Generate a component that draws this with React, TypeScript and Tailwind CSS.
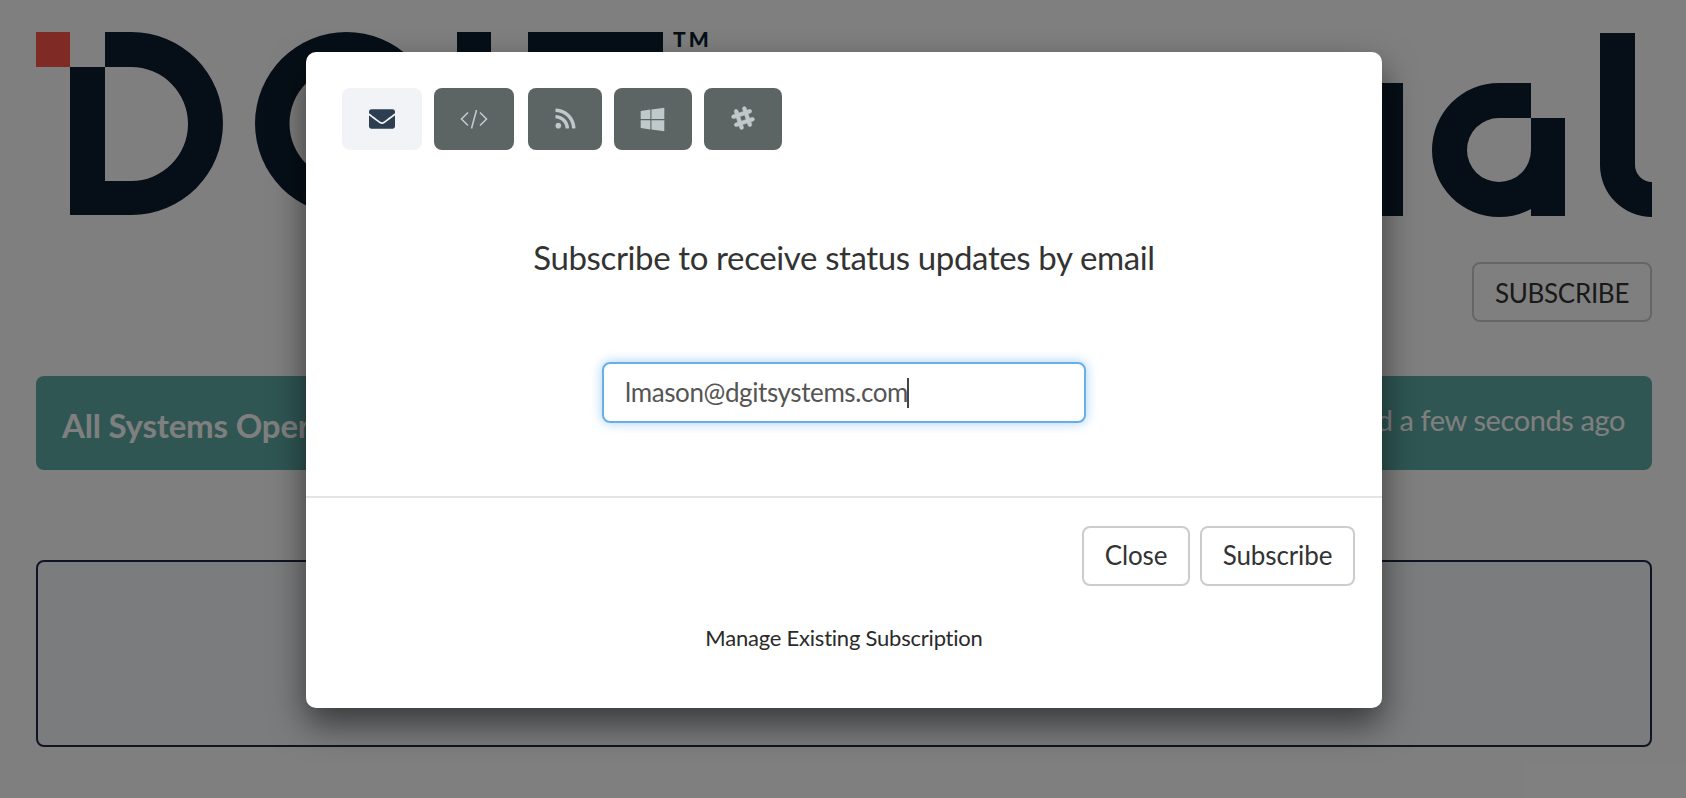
import { FaEnvelope, FaRss, FaWindows, FaSlackHash } from "react-icons/fa";

const tabBase = "flex h-[62px] items-center justify-center rounded-[8px]";
const btn = "h-[60px] rounded-[8px] border-2 border-[#cccccc] bg-white pb-[2px] text-[26px] leading-none tracking-[-0.1px] text-[#333333]";

function Logo() {
  return (
    <svg className="block h-[186px] w-[1616px] overflow-visible" viewBox="36 32 1616 186" fill="#0d1e2f">
      <rect x="36" y="32" width="34" height="35" fill="#ff5449" />
      <path
        fillRule="evenodd"
        d="M70 67H105V32H131.5A91.5 91.5 0 0 1 131.5 215H70ZM105 67V181H131A57 57 0 0 0 131 67Z"
      />
      <path
        fillRule="evenodd"
        d="M255 123.5A91.5 91.5 0 1 1 438 123.5A91.5 91.5 0 1 1 255 123.5ZM289.5 123.5A57 57 0 1 0 403.5 123.5A57 57 0 1 0 289.5 123.5Z"
      />
      <rect x="457" y="32" width="34" height="183" />
      <rect x="528" y="32" width="135" height="35" />
      <text x="673" y="47" fontFamily="Lato, sans-serif" fontWeight="900" fontSize="21" letterSpacing="3">TM</text>
      <rect x="1300" y="83" width="103" height="133" />
      <path
        fillRule="evenodd"
        d="M1499 83H1531V118H1565V216H1531V209A67 67 0 0 1 1499 217A67 67 0 0 1 1432 150A67 67 0 0 1 1499 83ZM1499 118A32 32 0 0 0 1467 150A32 32 0 0 0 1531 150V118Z"
      />
      <path d="M1600 33H1635V165A17 17 0 0 0 1652 182V217A52 52 0 0 1 1600 165Z" />
    </svg>
  );
}

export default function App() {
  return (
    <div className="relative h-[798px] w-[1686px] overflow-hidden bg-white font-['Lato',sans-serif]">
      <div className="flex flex-col pl-[36px] pr-[34px] pt-[32px]">
        <Logo />
        <div className="mt-[44px] flex justify-end">
          <button className="h-[60px] w-[180px] rounded-[8px] border-2 border-[#cccccc] pt-[2px] text-[26px] uppercase leading-none tracking-[-0.3px] text-[#333333]">
            Subscribe
          </button>
        </div>
        <div className="mt-[54px] flex h-[94px] items-center justify-between rounded-[8px] bg-[#5fada7] pl-[26px] pr-[27px]">
          <span className="mt-[6px] text-[33px] font-bold tracking-[-0.2px] text-white">All Systems Operational</span>
          <span className="mb-[6px] text-[29px] tracking-[-0.4px] text-white">Last updated a few seconds ago</span>
        </div>
        <div className="mt-[90px] h-[187px] rounded-[8px] border-2 border-[#1f2a44] bg-[#f6f9fc]" />
      </div>

      <div className="absolute inset-0 flex items-start justify-center bg-black/50 pt-[52px]">
        <div className="ml-[2px] flex h-[656px] w-[1076px] flex-col rounded-[10px] bg-white shadow-[0_16px_34px_rgba(0,0,0,0.55)]">
          <div className="flex gap-[12px] px-[36px] pt-[36px]">
            <div className={`${tabBase} w-[80px] bg-[#f1f3f6] text-[#2c3e50]`}>
              <FaEnvelope className="size-[26px]" />
            </div>
            <div className={`${tabBase} w-[80px] bg-[#5c6464] text-[#bfc9c9]`}>
              <svg viewBox="0 0 28 20" className="h-[20px] w-[28px]" fill="none" stroke="currentColor" strokeWidth="1.6">
                <path d="M8 3.5 1.5 10 8 16.5M20 3.5 26.5 10 20 16.5M16.5 1 11.5 19.5" />
              </svg>
            </div>
            <div className={`${tabBase} ml-[2px] w-[74px] bg-[#5c6464] text-[#bfc9c9]`}>
              <FaRss className="size-[23px] -translate-y-[1px]" />
            </div>
            <div className={`${tabBase} w-[78px] bg-[#5c6464] text-[#bfc9c9]`}>
              <FaWindows className="size-[27px] -translate-x-[1px]" />
            </div>
            <div className={`${tabBase} w-[78px] bg-[#5c6464] text-[#bfc9c9]`}>
              <FaSlackHash className="size-[26px] -translate-y-[1px]" strokeWidth={12} />
            </div>
          </div>

          <h2 className="mt-[87px] text-center text-[33px] leading-[40px] tracking-[-0.37px] text-[#333333]">
            Subscribe to receive status updates by email
          </h2>

          <div className="mt-[85px] flex justify-center">
            <div className="flex h-[61px] w-[484px] items-center rounded-[8px] border-2 border-[#66afe9] bg-white pl-[21px] text-[26px] tracking-[-0.4px] text-[#555555] shadow-[0_0_12px_rgba(102,175,233,0.6)]">
              <span>lmason@dgitsystems.com</span>
              <span className="ml-[-1px] h-[30px] w-[2px] bg-[#444444]" />
            </div>
          </div>

          <div className="mt-[73px] h-[2px] bg-[#e5e5e5]" />

          <div className="mt-[28px] flex justify-end gap-[10px] pr-[27px]">
            <button className={`${btn} w-[108px]`}>Close</button>
            <button className={`${btn} w-[155px]`}>Subscribe</button>
          </div>

          <p className="mt-[38px] text-center text-[22px] leading-[28px] tracking-[-0.22px] text-[#2a2a2a]">Manage Existing Subscription</p>
        </div>
      </div>
    </div>
  );
}
